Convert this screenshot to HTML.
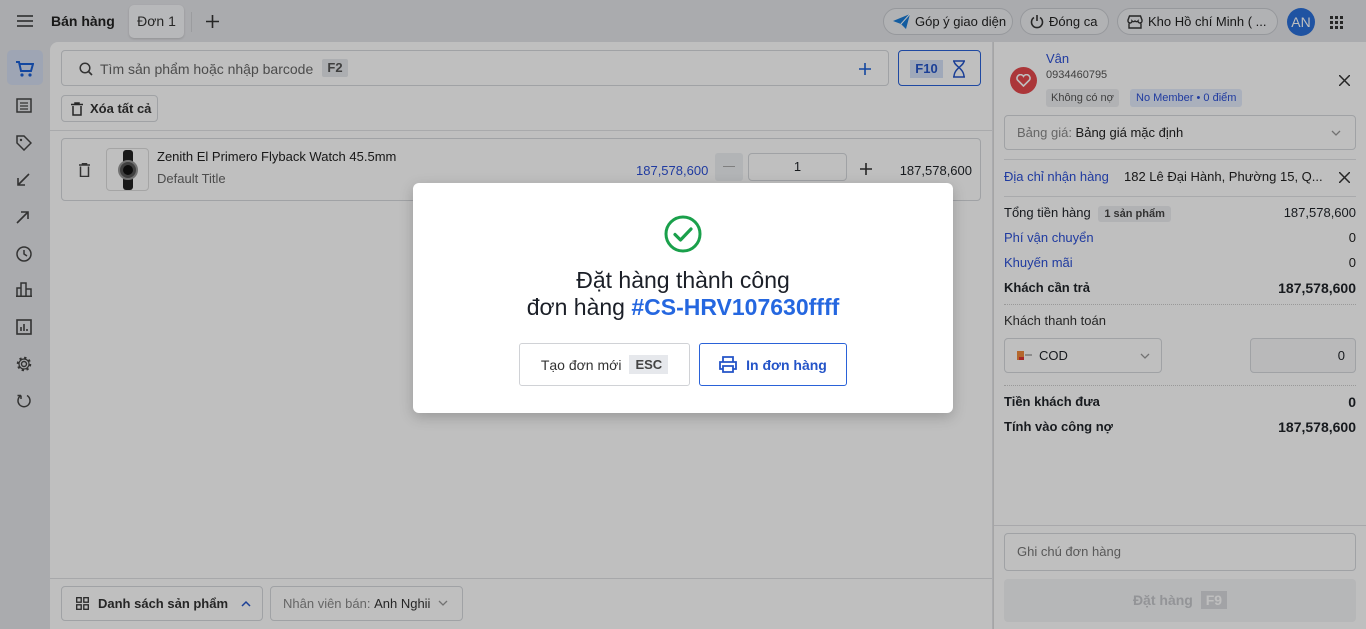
<!DOCTYPE html>
<html><head><meta charset="utf-8">
<style>
*{box-sizing:border-box;margin:0;padding:0}
body{width:1366px;height:629px;overflow:hidden;font-family:"Liberation Sans",sans-serif;font-size:13px;color:#1f2328;background:#e3e4e8;position:relative}
.abs{position:absolute}
svg{display:block;flex:none}
.top{left:0;top:0;width:1366px;height:42px}
.pill{position:absolute;top:8px;height:27px;border:1px solid #c9cbd0;border-radius:14px;background:#eceef1;display:flex;align-items:center;padding:0 9px;gap:5px;font-size:13px;color:#222;white-space:nowrap;overflow:hidden}
.side svg{position:absolute;left:16px}
.main{left:50px;top:42px;width:942px;height:587px;background:#fff;border-top-left-radius:8px}
.right{left:993px;top:42px;width:373px;height:587px;background:#fff;border-left:1px solid #ddd}
.bx{position:absolute;border:1px solid #d6d8dc;border-radius:4px;background:#fff}
.row{position:absolute;left:11px;right:10px;display:flex;justify-content:space-between;font-size:13px}
.blue{color:#2b4fd6}
.ov{left:0;top:0;width:1366px;height:629px;background:rgba(0,0,0,.25)}
</style></head><body>
<!-- top bar -->
<div class="abs top">
  <svg class="abs" style="left:17px;top:15px" width="16" height="12"><path d="M0 1h16M0 6h16M0 11h16" stroke="#333" stroke-width="1.6"/></svg>
  <div class="abs" style="left:51px;top:13px;font-size:14px;font-weight:bold;color:#222">Bán hàng</div>
  <div class="abs" style="left:129px;top:5px;width:55px;height:33px;background:#f5f6f8;border-radius:5px;box-shadow:0 1px 2px rgba(0,0,0,.15);font-size:14px;text-align:center;line-height:33px;color:#333">Đơn 1</div>
  <div class="abs" style="left:191px;top:12px;width:1px;height:20px;background:#cfd1d5"></div>
  <svg class="abs" style="left:206px;top:15px" width="13" height="13"><path d="M6.5 0v13M0 6.5h13" stroke="#333" stroke-width="1.6"/></svg>
  <div class="pill" style="left:883px;width:130px"><svg width="17" height="15"><path d="M0 7L17 0 13 15 8 10z" fill="#1a7bd6"/><path d="M8 10L17 0" stroke="#fff" stroke-width="1"/></svg>Góp ý giao diện</div>
  <div class="pill" style="left:1020px;width:89px"><svg width="14" height="15"><path d="M4 3.5A5.5 5.5 0 1 0 10 3.5M7 1v6" stroke="#333" stroke-width="1.6" fill="none"/></svg>Đóng ca</div>
  <div class="pill" style="left:1117px;width:161px"><svg width="16" height="14"><path d="M1 5l1.5-4h11L15 5v1a2 2 0 0 1-4 0 2 2 0 0 1-3 0 2 2 0 0 1-3 0 2 2 0 0 1-4 0zM2 7v6h12V7" stroke="#333" stroke-width="1.4" fill="none"/></svg>Kho Hồ chí Minh ( ...</div>
  <div class="abs" style="left:1287px;top:8px;width:28px;height:28px;border-radius:50%;background:#2a6fd9;color:#fff;font-size:14px;text-align:center;line-height:28px">AN</div>
  <svg class="abs" style="left:1330px;top:16px" width="13" height="13" fill="#333"><rect x="0" y="0" width="3" height="3"/><rect x="5" y="0" width="3" height="3"/><rect x="10" y="0" width="3" height="3"/><rect x="0" y="5" width="3" height="3"/><rect x="5" y="5" width="3" height="3"/><rect x="10" y="5" width="3" height="3"/><rect x="0" y="10" width="3" height="3"/><rect x="5" y="10" width="3" height="3"/><rect x="10" y="10" width="3" height="3"/></svg>
</div>
<!-- sidebar -->
<div class="abs side" style="left:0;top:42px;width:50px;height:587px">
  <div class="abs" style="left:7px;top:8px;width:36px;height:35px;background:#d3dcf0;border-radius:5px"></div>
  <svg style="top:19px" width="18" height="16"><path d="M0 1h3l2 9h10l2-7H4" stroke="#1a5fd6" stroke-width="2" fill="none"/><circle cx="6" cy="14" r="1.6" fill="#1a5fd6"/><circle cx="14" cy="14" r="1.6" fill="#1a5fd6"/></svg>
  <svg style="top:56px" width="16" height="15"><rect x="1" y="1" width="14" height="13" stroke="#444" stroke-width="1.5" fill="none"/><path d="M4 5h8M4 8h8M4 11h8" stroke="#444" stroke-width="1.3"/></svg>
  <svg style="top:93px" width="16" height="16"><path d="M1 1h7l7 7-7 7-7-7z" stroke="#444" stroke-width="1.5" fill="none"/><circle cx="5" cy="5" r="1.2" fill="#444"/></svg>
  <svg style="top:131px" width="14" height="14"><path d="M13 1L2 12M2 5v7h7" stroke="#444" stroke-width="1.6" fill="none"/></svg>
  <svg style="top:168px" width="14" height="14"><path d="M1 13L12 2M5 2h7v7" stroke="#444" stroke-width="1.6" fill="none"/></svg>
  <svg style="top:204px" width="16" height="16"><circle cx="8" cy="8" r="7" stroke="#444" stroke-width="1.5" fill="none"/><path d="M8 4v4l3 2" stroke="#444" stroke-width="1.5" fill="none"/></svg>
  <svg style="top:240px" width="16" height="15"><path d="M1 14V6h4v8M5 14V1h5v13M10 14V7h5v7M0 14.3h16" stroke="#444" stroke-width="1.5" fill="none"/></svg>
  <svg style="top:277px" width="16" height="16"><rect x="1" y="1" width="14" height="14" stroke="#444" stroke-width="1.6" fill="none"/><path d="M5 12V8M8 12V5M11 12V10" stroke="#444" stroke-width="1.6"/></svg>
  <svg style="top:314px" width="16" height="16"><circle cx="8" cy="8" r="2.5" stroke="#444" stroke-width="1.4" fill="none"/><circle cx="8" cy="8" r="6" stroke="#444" stroke-width="2.5" stroke-dasharray="2.2 2.5" fill="none"/><circle cx="8" cy="8" r="5" stroke="#444" stroke-width="1.2" fill="none"/></svg>
  <svg style="top:351px" width="16" height="16"><path d="M5 2.5A6 6 0 1 0 11 2.5M5 2.5V6M5 2.5H1.5" stroke="#444" stroke-width="1.5" fill="none"/></svg>
</div>
<!-- main -->
<div class="abs main">
  <div class="bx" style="left:11px;top:8px;width:828px;height:36px">
    <svg class="abs" style="left:17px;top:11px" width="14" height="14"><circle cx="6" cy="6" r="4.8" stroke="#444" stroke-width="1.5" fill="none"/><path d="M9.5 9.5L13 13" stroke="#444" stroke-width="1.6"/></svg>
    <div class="abs" style="left:38px;top:10px;font-size:14px;color:#666">Tìm sản phẩm hoặc nhập barcode</div>
    <div class="abs" style="left:260px;top:8px;width:26px;height:18px;background:#e6e8ec;border-radius:2px;font-size:13px;font-weight:bold;color:#555;text-align:center;line-height:18px">F2</div>
    <svg class="abs" style="left:797px;top:12px" width="12" height="12"><path d="M6 0v12M0 6h12" stroke="#1a5fd6" stroke-width="1.6"/></svg>
  </div>
  <div class="bx" style="left:848px;top:8px;width:83px;height:36px;border-color:#2a62d8">
    <div class="abs" style="left:11px;top:9px;width:33px;height:18px;background:#d5e0f7;font-weight:bold;color:#2454c8;font-size:13px;text-align:center;line-height:18px">F10</div>
    <svg class="abs" style="left:52px;top:9px" width="16" height="18"><path d="M2 1h12M2 17h12M3 1c0 5 10 7 10 16M13 1c0 5-10 7-10 16" stroke="#2454c8" stroke-width="1.5" fill="none"/></svg>
  </div>
  <div class="bx" style="left:11px;top:53px;width:97px;height:27px;display:flex;align-items:center;padding-left:9px;gap:7px;font-size:13px;font-weight:bold;color:#333"><svg width="12" height="14"><path d="M0 2.5h12M4 2.5V1h4v1.5M2 4v9h8V4" stroke="#333" stroke-width="1.5" fill="none"/></svg>Xóa tất cả</div>
  <div class="abs" style="left:0;top:88px;width:942px;height:1px;background:#e2e3e6"></div>
  <div class="bx" style="left:11px;top:96px;width:920px;height:63px">
    <svg class="abs" style="left:17px;top:24px" width="11" height="14"><path d="M0 2h11M3.5 2V.7h4V2M1.5 3.5v10h8v-10" stroke="#444" stroke-width="1.5" fill="none"/></svg>
    <div class="bx" style="left:44px;top:9px;width:43px;height:43px;border-color:#ddd">
      <svg class="abs" style="left:9px;top:1px" width="24" height="40"><rect x="7" y="0" width="10" height="40" rx="3" fill="#222"/><circle cx="12" cy="20" r="9" fill="#555" stroke="#999" stroke-width="2"/><circle cx="12" cy="20" r="5" fill="#111"/></svg>
    </div>
    <div class="abs" style="left:95px;top:10px;font-size:13px;color:#222">Zenith El Primero Flyback Watch 45.5mm</div>
    <div class="abs" style="left:95px;top:32px;font-size:13px;color:#666">Default Title</div>
    <div class="abs blue" style="left:574px;top:24px;font-size:13px">187,578,600</div>
    <div class="abs" style="left:653px;top:14px;width:28px;height:28px;background:#eef0f3;border-radius:3px"><div style="margin:13px 8px;height:1px;background:#aaa"></div></div>
    <div class="bx" style="left:686px;top:14px;width:99px;height:28px;text-align:center;line-height:26px;font-size:13px">1</div>
    <svg class="abs" style="left:798px;top:24px" width="12" height="12"><path d="M6 0v12M0 6h12" stroke="#333" stroke-width="1.6"/></svg>
    <div class="abs" style="right:8px;top:24px;font-size:13px">187,578,600</div>
  </div>
  <div class="abs" style="left:0;top:536px;width:942px;height:1px;background:#dfe0e3"></div>
  <div class="bx" style="left:11px;top:544px;width:202px;height:35px;display:flex;align-items:center;padding-left:14px;gap:9px;font-size:13px;font-weight:bold;color:#333">
    <svg width="13" height="13"><rect x=".7" y=".7" width="4.5" height="4.5" stroke="#333" stroke-width="1.3" fill="none"/><rect x="7.8" y=".7" width="4.5" height="4.5" stroke="#333" stroke-width="1.3" fill="none"/><rect x=".7" y="7.8" width="4.5" height="4.5" stroke="#333" stroke-width="1.3" fill="none"/><rect x="7.8" y="7.8" width="4.5" height="4.5" stroke="#333" stroke-width="1.3" fill="none"/></svg>Danh sách sản phẩm <svg width="10" height="7" style="margin-left:4px"><path d="M1 6l4-4 4 4" stroke="#2454c8" stroke-width="1.5" fill="none"/></svg></div>
  <div class="bx" style="left:220px;top:544px;width:193px;height:35px;display:flex;align-items:center;padding-left:12px;font-size:13px;color:#888">Nhân viên bán:&nbsp;<span style="color:#333">Anh Nghii</span><svg width="10" height="7" style="margin-left:8px"><path d="M1 1l4 4 4-4" stroke="#999" stroke-width="1.3" fill="none"/></svg></div>
</div>
<!-- right -->
<div class="abs right">
  <div class="abs" style="left:16px;top:25px;width:27px;height:27px;border-radius:50%;background:#e5484d"><svg class="abs" style="left:6px;top:7px" width="15" height="13"><path d="M7.5 12L1.5 6A3.3 3.3 0 0 1 7.5 2.3 3.3 3.3 0 0 1 13.5 6z" stroke="#fff" stroke-width="1.6" fill="none"/></svg></div>
  <div class="abs blue" style="left:52px;top:9px;font-size:13px">Vân</div>
  <div class="abs" style="left:52px;top:27px;font-size:11px;color:#555">0934460795</div>
  <div class="abs" style="left:52px;top:47px;height:18px;padding:0 5px;background:#eceef1;border-radius:3px;font-size:11px;color:#555;line-height:18px">Không có nợ</div>
  <div class="abs" style="left:136px;top:47px;height:18px;padding:0 6px;background:#e3ebfb;border-radius:3px;font-size:11px;color:#2b4fd6;line-height:18px">No Member • 0 điểm</div>
  <svg class="abs" style="left:345px;top:33px" width="11" height="11"><path d="M0 0l11 11M11 0L0 11" stroke="#333" stroke-width="1.5"/></svg>
  <div class="bx" style="left:10px;top:73px;width:352px;height:35px;font-size:13px;line-height:33px;padding-left:12px;color:#888">Bảng giá: <span style="color:#222">Bảng giá mặc định</span><svg class="abs" style="left:326px;top:14px" width="10" height="7"><path d="M1 1l4 4 4-4" stroke="#999" stroke-width="1.3" fill="none"/></svg></div>
  <div class="abs" style="left:10px;top:117px;width:352px;height:1px;background:#e2e3e6"></div>
  <div class="abs blue" style="left:10px;top:127px;font-size:13px">Địa chỉ nhận hàng</div>
  <div class="abs" style="left:130px;top:127px;font-size:13px;color:#222">182 Lê Đại Hành, Phường 15, Q...</div>
  <svg class="abs" style="left:345px;top:130px" width="11" height="11"><path d="M0 0l11 11M11 0L0 11" stroke="#333" stroke-width="1.5"/></svg>
  <div class="abs" style="left:10px;top:154px;width:352px;height:1px;background:#e2e3e6"></div>
  <div class="row" style="top:163px;left:10px;right:10px"><span>Tổng tiền hàng <span style="font-size:11px;font-weight:bold;background:#eceef1;padding:2px 6px;border-radius:3px;margin-left:4px;color:#444">1 sản phẩm</span></span><span>187,578,600</span></div>
  <div class="row blue" style="top:188px;left:10px"><span>Phí vận chuyển</span><span style="color:#222">0</span></div>
  <div class="row blue" style="top:213px;left:10px"><span>Khuyến mãi</span><span style="color:#222">0</span></div>
  <div class="row" style="top:238px;left:10px;font-weight:bold"><span>Khách cần trả</span><span style="font-size:14px">187,578,600</span></div>
  <div class="abs" style="left:10px;top:262px;width:352px;border-top:1px dotted #ccc"></div>
  <div class="abs" style="left:10px;top:271px;font-size:13px;color:#333">Khách thanh toán</div>
  <div class="bx" style="left:10px;top:296px;width:158px;height:35px;display:flex;align-items:center;padding-left:12px;gap:7px;font-size:13px"><svg width="15" height="9"><rect width="7" height="9" fill="#f08a3c"/><rect x="8" y="3" width="7" height="2" fill="#bbb"/><rect x="2" y="6" width="5" height="3" fill="#d33"/></svg>COD<svg class="abs" style="left:135px;top:14px" width="10" height="7"><path d="M1 1l4 4 4-4" stroke="#999" stroke-width="1.3" fill="none"/></svg></div>
  <div class="bx" style="left:256px;top:296px;width:106px;height:35px;background:#f7f7f8;text-align:right;padding-right:10px;line-height:33px;font-size:13px">0</div>
  <div class="abs" style="left:10px;top:343px;width:352px;border-top:1px dotted #ccc"></div>
  <div class="row" style="top:352px;left:10px;font-weight:bold"><span>Tiền khách đưa</span><span style="font-size:14px">0</span></div>
  <div class="row" style="top:377px;left:10px;font-weight:bold"><span>Tính vào công nợ</span><span style="font-size:14px">187,578,600</span></div>
  <div class="abs" style="left:0;top:483px;width:373px;height:1px;background:#e0e1e4"></div>
  <div class="bx" style="left:10px;top:491px;width:352px;height:38px;padding-left:12px;line-height:36px;font-size:13px;color:#777">Ghi chú đơn hàng</div>
  <div class="abs" style="left:10px;top:537px;width:352px;height:43px;background:#f3f4f6;border-radius:4px;text-align:center;line-height:43px;font-size:14px;font-weight:bold;color:#c4c6ca">Đặt hàng <span style="background:#d8dade;color:#fff;padding:1px 5px;margin-left:4px">F9</span></div>
</div>
<!-- overlay -->
<div class="abs ov"></div>
<!-- modal -->
<div class="abs" style="left:413px;top:183px;width:540px;height:230px;background:#fff;border-radius:6px;box-shadow:0 4px 14px rgba(0,0,0,.2)">
  <svg class="abs" style="left:251px;top:32px" width="38" height="38"><circle cx="19" cy="19" r="17" stroke="#1aa04b" stroke-width="3" fill="none"/><path d="M11 19.5l5.5 5.5L27 14" stroke="#1aa04b" stroke-width="3.2" fill="none" stroke-linecap="round" stroke-linejoin="round"/></svg>
  <div class="abs" style="left:0;width:540px;top:84px;text-align:center;font-size:23px;line-height:27px;color:#1b1f27">Đặt hàng thành công<br>đơn hàng <span style="color:#2567e0;font-weight:bold">#CS-HRV107630ffff</span></div>
  <div class="abs" style="left:106px;top:160px;width:171px;height:43px;border:1px solid #d0d2d6;border-radius:3px;display:flex;align-items:center;justify-content:center;gap:8px;font-size:14px;color:#333">Tạo đơn mới <span style="background:#e6e8ec;font-weight:bold;padding:2px 6px;color:#444;font-size:13px">ESC</span></div>
  <div class="abs" style="left:286px;top:160px;width:148px;height:43px;border:1px solid #2a62d8;border-radius:3px;display:flex;align-items:center;justify-content:center;gap:9px;font-size:14px;font-weight:bold;color:#2454c8"><svg width="18" height="17"><path d="M4 6V1h10v5M4 13H1V6h16v7h-3M4 10h10v6H4z" stroke="#2454c8" stroke-width="1.8" fill="none"/></svg>In đơn hàng</div>
</div>
</body></html>
